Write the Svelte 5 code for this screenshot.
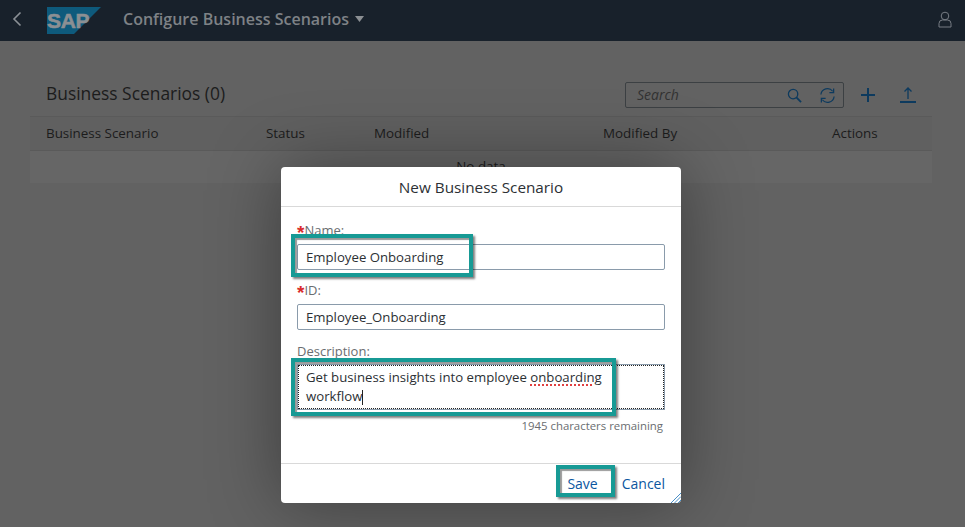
<script>
  const columns = [
    { label: 'Business Scenario', width: 220 },
    { label: 'Status', width: 108 },
    { label: 'Modified', width: 229 },
    { label: 'Modified By', width: 229 },
    { label: 'Actions', width: 100 }
  ];
</script>

<div class="page">
  <header class="shell">
    <svg class="back" viewBox="0 0 12 18" width="12" height="18"><path d="M9.5 2.5 L3 9 L9.5 15.5" fill="none" stroke="#8b9096" stroke-width="1.6" /></svg>
    <div class="logo">
      <svg viewBox="0 0 54 27" width="54" height="27"><polygon points="0,0 54,0 27,27 0,27" fill="#0e5a7c" /></svg>
      <span class="logo-text">SAP</span>
    </div>
    <h1 class="shell-title">Configure Business Scenarios</h1>
    <svg class="caret" viewBox="0 0 9 6" width="9" height="6"><polygon points="0,0 9,0 4.5,6" fill="#8b8f93" /></svg>
    <svg class="user" viewBox="0 0 14 17" width="14" height="17">
      <circle cx="7" cy="5" r="3.8" fill="none" stroke="#777d84" stroke-width="1" />
      <path d="M1 16 V12.5 Q1 9 4.5 9 H9.5 Q13 9 13 12.5 V16 Z" fill="none" stroke="#777d84" stroke-width="1" />
    </svg>
  </header>

  <main class="content">
    <div class="toolbar">
      <h2>Business Scenarios (0)</h2>
      <div class="search">
        <span class="placeholder">Search</span>
        <svg viewBox="0 0 16 16" width="15" height="15"><circle cx="6.5" cy="6.5" r="5" fill="none" stroke="#0d3a5e" stroke-width="1.4" /><path d="M10 10 L15 15" stroke="#0d3a5e" stroke-width="1.9" /></svg>
        <svg viewBox="0 0 18 18" width="17" height="17"><path d="M2 8 A7 7 0 0 1 14.5 4.5 M16 10 A7 7 0 0 1 3.5 13.5" fill="none" stroke="#0d3a5e" stroke-width="1.3" /><path d="M15.5 1.5 V6 H11 M2.5 16.5 V12 H7" fill="none" stroke="#0d3a5e" stroke-width="1.3" /></svg>
      </div>
      <svg class="tool-add" viewBox="0 0 14 14" width="14" height="14"><path d="M7 0 V14 M0 7 H14" stroke="#0d3a5e" stroke-width="2" /></svg>
      <svg class="tool-up" viewBox="0 0 16 16" width="16" height="16"><path d="M8 12 V1 M4.5 4.5 L8 1 L11.5 4.5" fill="none" stroke="#0d3a5e" stroke-width="1.3" /><path d="M0 15 H16" stroke="#0d3a5e" stroke-width="2" /></svg>
    </div>
    <div class="table">
      <div class="table-head">
        {#each columns as col}
          <span style="width: {col.width}px">{col.label}</span>
        {/each}
      </div>
      <div class="no-data">No data</div>
    </div>
  </main>

  <div class="dialog">
    <div class="dialog-title">New Business Scenario</div>
    <div class="dialog-body">
      <label class="field-label name-label"><span class="req">*</span>Name:</label>
      <div class="input">Employee Onboarding</div>
      <label class="field-label id-label"><span class="req">*</span>ID:</label>
      <div class="input">Employee_Onboarding</div>
      <label class="field-label desc-label">Description:</label>
      <div class="textarea">
        <div>Get business insights into employee <span class="spell">onboarding</span></div>
        <div>workflow<span class="cursor"></span></div>
      </div>
      <div class="counter">1945 characters remaining</div>
    </div>
    <div class="dialog-footer">
      <span class="btn save">Save</span>
      <span class="btn">Cancel</span>
    </div>
    <svg class="grip" viewBox="0 0 10 10" width="10" height="10"><path d="M0 10 L10 0 M3.5 10 L10 3.5 M7 10 L10 7" stroke="#4a90c8" stroke-width="1" /></svg>

    <div class="mark mark-name"></div>
    <div class="mark mark-desc"></div>
    <div class="mark mark-save"></div>
  </div>
</div>

<style>
  :global(body) {
    margin: 0;
    background: #626262;
  }

  .page {
    position: relative;
    width: 965px;
    height: 527px;
    overflow: hidden;
    font-family: "Open Sans", "Liberation Sans", sans-serif;
    background: #626262;
  }

  .shell {
    display: flex;
    align-items: center;
    box-sizing: border-box;
    height: 41px;
    padding-bottom: 3px;
    background: #18212b;
  }

  .back {
    margin-left: 11px;
  }

  .logo {
    position: relative;
    display: flex;
    margin: 2px 0 0 24px;
  }

  .logo-text {
    position: absolute;
    left: 0;
    top: 1px;
    font-family: "Liberation Sans", sans-serif;
    font-weight: 700;
    font-size: 21px;
    line-height: 26px;
    letter-spacing: -0.3px;
    color: #8b8f93;
    -webkit-text-stroke: 0.6px #8b8f93;
  }

  .shell-title {
    margin: 0 0 0 22px;
    font-size: 16px;
    font-weight: 600;
    color: #7e8286;
  }

  .caret {
    margin-left: 6px;
  }

  .user {
    margin-left: auto;
    margin-right: 13px;
  }

  .content {
    padding: 0 33px 0 30px;
  }

  .toolbar {
    display: flex;
    align-items: center;
    box-sizing: border-box;
    height: 75px;
    padding: 33px 16px 0;
  }

  .toolbar h2 {
    margin: -4px auto 0 0;
    font-size: 17.4px;
    font-weight: 400;
    color: #1c1c1c;
  }

  .search {
    display: flex;
    align-items: center;
    box-sizing: border-box;
    width: 219px;
    height: 26px;
    padding: 0 7px 0 11px;
    gap: 17px;
    border: 1px solid #3c4043;
    border-radius: 2px;
  }

  .placeholder {
    margin: -1px auto 0 0;
    font-size: 14px;
    font-style: italic;
    color: #333;
  }

  .tool-add {
    margin-left: 17px;
  }

  .tool-up {
    margin-left: 25px;
  }

  .table {
    height: 67px;
    background: #666;
  }

  .table-head {
    display: flex;
    align-items: center;
    box-sizing: border-box;
    height: 35px;
    padding: 0 0 2px 16px;
    border-top: 1px solid #5a5a5a;
    border-bottom: 1px solid #5a5a5a;
    background: #606060;
    font-size: 13.4px;
    color: #1c1c1c;
  }

  .no-data {
    margin-top: 6px;
    text-align: center;
    font-size: 13.4px;
    color: #1c1c1c;
  }

  .dialog {
    position: absolute;
    left: 281px;
    top: 167px;
    display: flex;
    flex-direction: column;
    box-sizing: border-box;
    width: 400px;
    height: 336px;
    border-radius: 4px;
    background: #fff;
    box-shadow: 0 0 70px rgba(0, 0, 0, 0.38);
  }

  .dialog-title {
    height: 39px;
    border-bottom: 1px solid #d9d9d9;
    text-align: center;
    font-size: 15.3px;
    line-height: 40px;
    color: #2c3034;
  }

  .dialog-body {
    flex: 1;
    padding: 0 16px;
  }

  .field-label {
    display: block;
    height: 18px;
    font-size: 13px;
    line-height: 18px;
    color: #6a6d70;
  }

  .name-label {
    margin: 14px 0 5px;
  }

  .id-label {
    margin: 11px 0 5px;
  }

  .desc-label {
    margin: 12px 0 4px;
  }

  .req {
    color: #d92b2b;
    font-family: "Liberation Sans", sans-serif;
    font-size: 19px;
    font-weight: 700;
    line-height: 14px;
    vertical-align: -4px;
  }

  .input {
    box-sizing: border-box;
    width: 368px;
    height: 26px;
    padding-left: 8px;
    border: 1px solid #8a9bab;
    border-radius: 2px;
    font-size: 13.2px;
    line-height: 24px;
    color: #2c3034;
  }

  .textarea {
    box-sizing: border-box;
    width: 368px;
    height: 46px;
    padding: 3px 8px;
    border: 1px solid #8a9bab;
    outline: 1px dotted #222;
    outline-offset: -2px;
    font-size: 13.2px;
    line-height: 19px;
    color: #2c3034;
  }

  .spell {
    text-decoration: underline dotted #e04040 1.5px;
    text-underline-offset: 2px;
  }

  .cursor {
    display: inline-block;
    width: 1px;
    height: 15px;
    vertical-align: text-bottom;
    background: #222;
  }

  .counter {
    margin-top: 8px;
    padding-right: 2px;
    text-align: right;
    font-size: 11.4px;
    line-height: 16px;
    color: #6a6d70;
  }

  .dialog-footer {
    display: flex;
    align-items: center;
    justify-content: flex-end;
    box-sizing: border-box;
    height: 40px;
    padding: 0 16px;
    gap: 24px;
    border-top: 1px solid #d9d9d9;
    font-size: 14px;
    color: #0a56a0;
  }

  .grip {
    position: absolute;
    right: 0;
    bottom: 0;
  }

  .mark {
    position: absolute;
    box-sizing: border-box;
    border: 4px solid #179a95;
    box-shadow: 2px 2px 2px rgba(0, 0, 0, 0.5), inset 2px 2px 1px rgba(0, 0, 0, 0.4);
  }

  .mark-name {
    left: 10px;
    top: 67px;
    width: 182px;
    height: 43px;
  }

  .mark-desc {
    left: 10px;
    top: 191px;
    width: 325px;
    height: 58px;
  }

  .mark-save {
    left: 275px;
    top: 298px;
    width: 59px;
    height: 32px;
  }
</style>
